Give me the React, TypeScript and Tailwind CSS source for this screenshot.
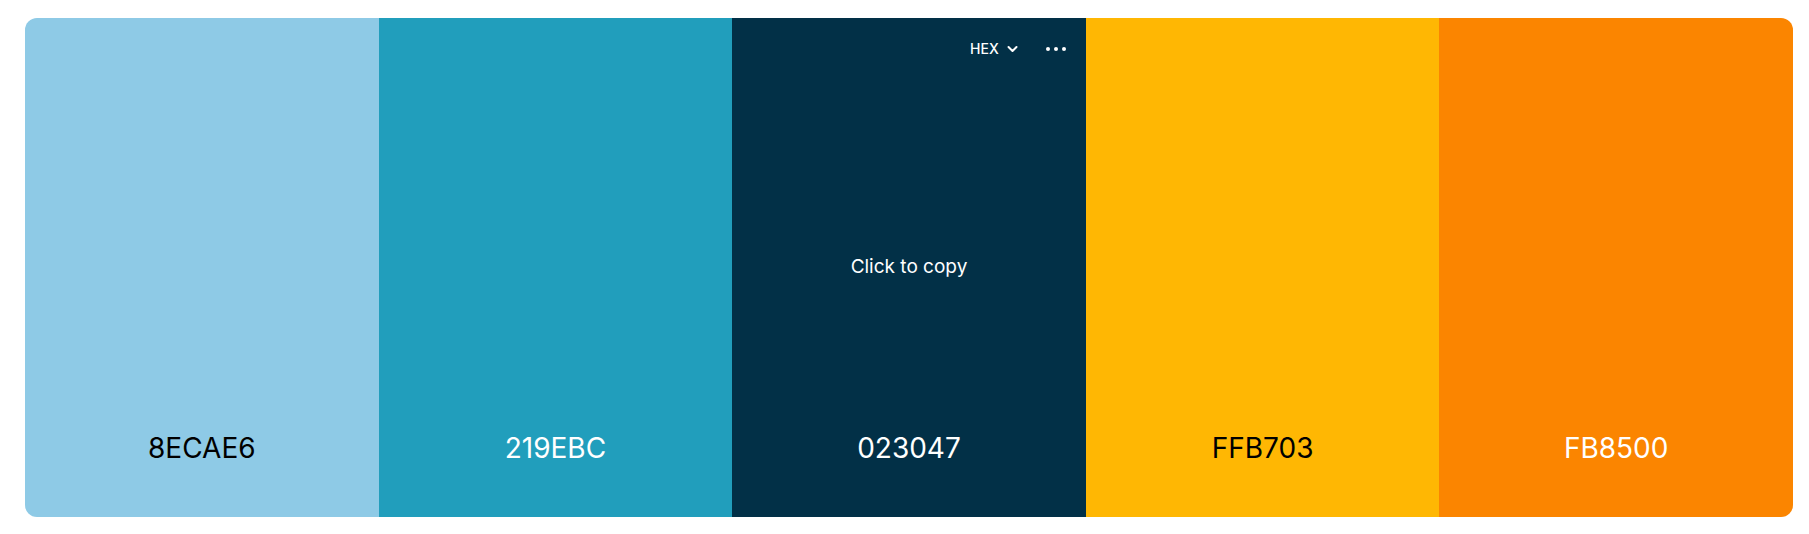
import React from 'react';

type Swatch = { hex: string; text: string };

const SWATCHES: Swatch[] = [
  { hex: '8ECAE6', text: 'text-black' },
  { hex: '219EBC', text: 'text-white' },
  { hex: '023047', text: 'text-white' },
  { hex: 'FFB703', text: 'text-black' },
  { hex: 'FB8500', text: 'text-white' },
];

const BG: Record<string, string> = {
  '8ECAE6': 'bg-[#8ECAE6]',
  '219EBC': 'bg-[#219EBC]',
  '023047': 'bg-[#023047]',
  'FFB703': 'bg-[#FFB703]',
  'FB8500': 'bg-[#FB8500]',
};

export default function App() {
  return (
    <div className="w-[1809px] h-[534px] bg-white font-['Inter',sans-serif] pt-[18px] pl-[25px]">
      <div className="flex w-[1768px] h-[499px] rounded-[12px] overflow-hidden">
        {SWATCHES.map((s, i) => {
          const active = i === 2;
          return (
            <div
              key={s.hex}
              className={`relative flex-1 flex flex-col justify-end items-center ${BG[s.hex]} ${s.text}`}
            >
              {active && (
                <>
                  {/* hover toolbar */}
                  <div className="absolute top-[24px] right-[20px] flex items-center text-white">
                    <button className="flex items-center gap-[8px] text-[14px] font-medium leading-none">
                      HEX
                      <svg width="11" height="8" viewBox="0 0 11 8" fill="none">
                        <path d="M1.5 2l4 4 4-4" stroke="currentColor" strokeWidth="2" strokeLinecap="round" strokeLinejoin="round" />
                      </svg>
                    </button>
                    <div className="ml-[28px] flex items-center gap-[4px]">
                      <span className="w-[4px] h-[4px] rounded-full bg-white" />
                      <span className="w-[4px] h-[4px] rounded-full bg-white" />
                      <span className="w-[4px] h-[4px] rounded-full bg-white" />
                    </div>
                  </div>
                  <div className="absolute inset-0 flex items-center justify-center text-[19px] text-white">
                    Click to copy
                  </div>
                </>
              )}
              <span className="text-[28px] leading-[32px] pb-[53px]">{s.hex}</span>
            </div>
          );
        })}
      </div>
    </div>
  );
}
